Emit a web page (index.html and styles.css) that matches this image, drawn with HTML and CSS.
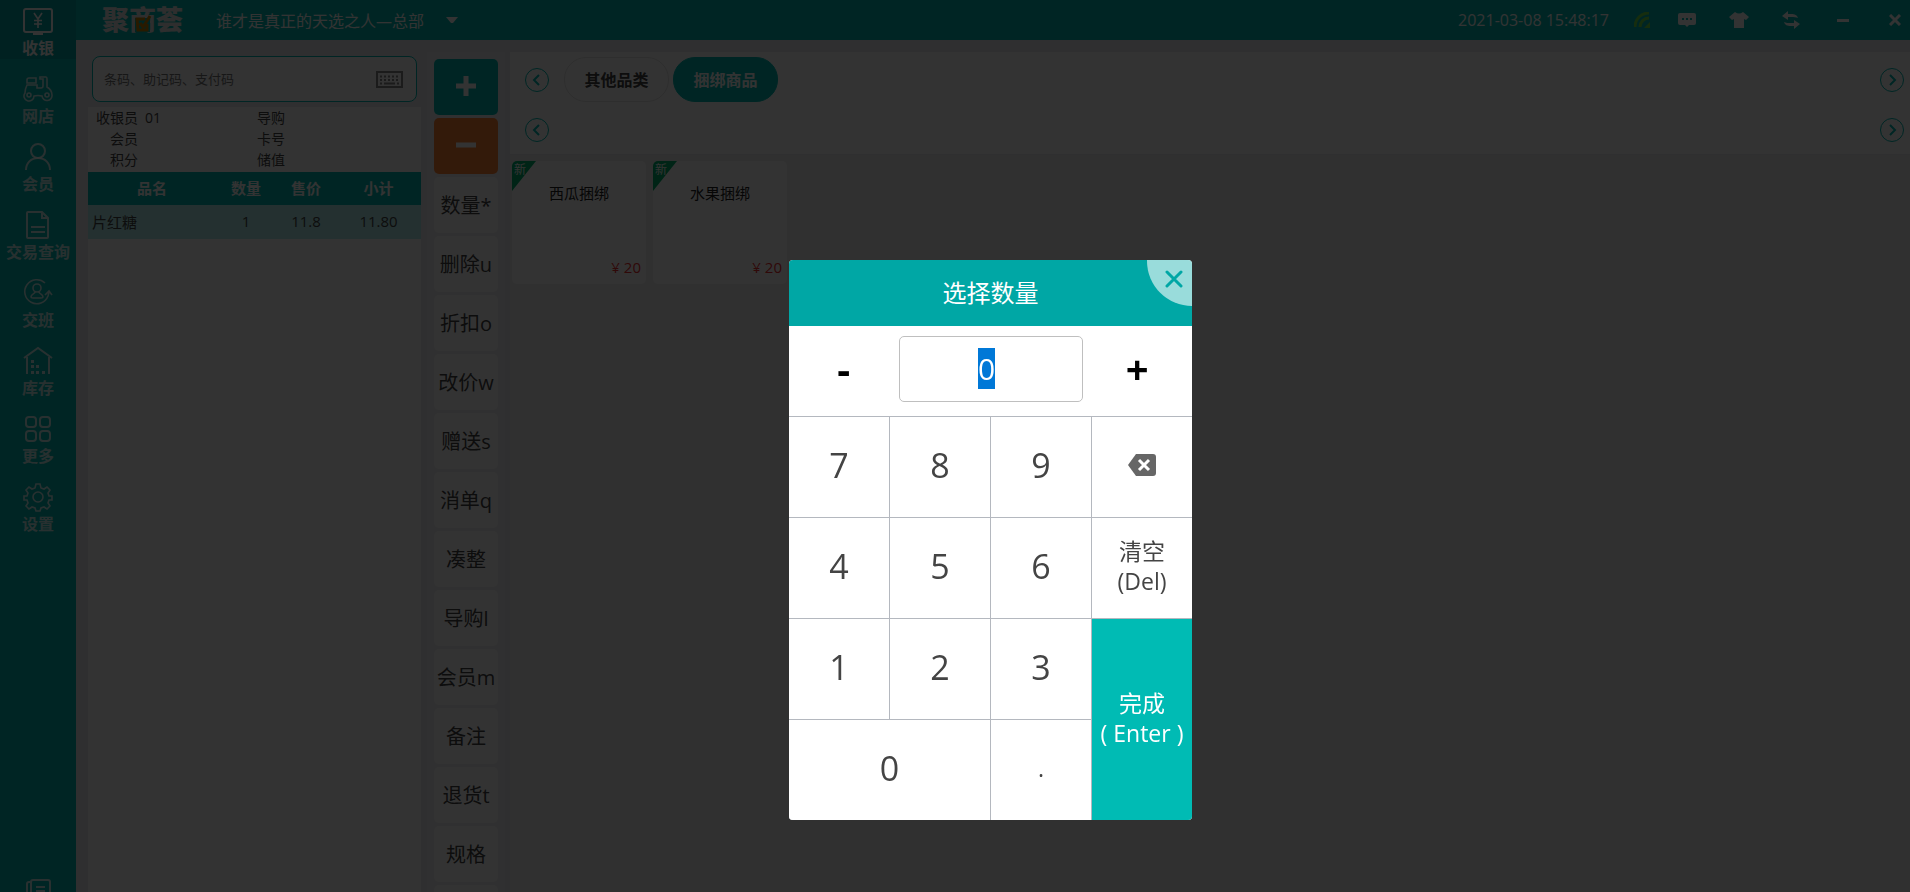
FILE: index.html
```html
<!DOCTYPE html>
<html lang="zh-CN">
<head>
  <meta charset="UTF-8">
  <title>聚商荟收银</title>
  <link rel="stylesheet" href="styles.css">
</head>
<body>

  <div class="app">
    <nav class="sidebar">
      <a href="#" class="nav-item active">
        <svg width="30" height="30" viewBox="0 0 30 30"><rect x="1" y="3" width="28" height="23" rx="2"/><path class="thin" d="M11 7l4 6 4-6M15 13v9M11 14.500h8M11 18h8"/><path d="M15 26v2" stroke-width="4"/><path d="M10 28h10"/></svg>
        <span>收银</span>
      </a>
      <a href="#" class="nav-item">
        <svg class="thin" width="30" height="30" viewBox="0 0 30 30"><path d="M6 4h7v5H4V6q0-2 2-2zM17 3h6q1 0 1 2v8q5 3 5 8a5 5 0 0 1-10 1q-4-1-8 0a5 5 0 1 1-9-3q0-4 2-8h10v3h4q2 0 2-2V5h-3z"/><circle cx="6" cy="21" r="2"/><circle cx="24" cy="21" r="2"/></svg>
        <span>网店</span>
      </a>
      <a href="#" class="nav-item">
        <svg width="30" height="30" viewBox="0 0 30 30"><circle cx="15" cy="9" r="7"/><path d="M3 28c0-7 5-12 12-12s12 5 12 12"/></svg>
        <span>会员</span>
      </a>
      <a href="#" class="nav-item">
        <svg width="30" height="30" viewBox="0 0 30 30"><path d="M5 2h14l6 6v19a1 1 0 0 1-1 1H5a1 1 0 0 1-1-1V3a1 1 0 0 1 1-1zM19 2v6h6M8 17h14M8 22h14"/></svg>
        <span>交易查询</span>
      </a>
      <a href="#" class="nav-item">
        <svg class="thin" width="30" height="30" viewBox="0 0 30 30"><path d="M22 5a12 12 0 1 0 3 13l1-4M22 17l4-4 3 4"/><circle cx="14" cy="10" r="4"/><path d="M12 14c0 2-4 2-4 5 0 1 1 1 2 1h8c1 0 2 0 2-1 0-3-4-3-4-5"/></svg>
        <span>交班</span>
      </a>
      <a href="#" class="nav-item">
        <svg width="30" height="30" viewBox="0 0 30 30"><path d="M1 12L15 2l14 10M4 11v17M26 11v17"/><path class="solid" d="M8 14h3v3H8zM8 19h3v3H8zM13 19h3v3h-3zM8 25h3v3H8zM13 25h3v3h-3zM19 25h3v3h-3z"/></svg>
        <span>库存</span>
      </a>
      <a href="#" class="nav-item">
        <svg width="30" height="30" viewBox="0 0 30 30"><rect x="3" y="3" width="10" height="10" rx="3"/><rect x="17" y="3" width="10" height="10" rx="3"/><rect x="3" y="17" width="10" height="10" rx="3"/><rect x="17" y="17" width="10" height="10" rx="3"/></svg>
        <span>更多</span>
      </a>
      <a href="#" class="nav-item">
        <svg class="thin" width="30" height="30" viewBox="0 0 30 30"><circle cx="15" cy="15" r="5"/><path d="M13 2h4l1 4 3 1 3-2 3 3-2 3 1 3 3 0v4l-3 0-1 3 2 3-3 3-3-2-3 1-1 3h-4l-1-3-3-1-3 2-3-3 2-3-1-3-3 0v-4l3 0 1-3-2-3 3-3 3 2 3-1z"/></svg>
        <span>设置</span>
      </a>
      <div class="sidebar-footer">
        <a href="#" class="nav-item" aria-label="新闻">
          <svg width="30" height="30" viewBox="0 0 30 30"><path d="M8 28V4a2 2 0 0 1 2-2h15a2 2 0 0 1 2 2v24M8 4H6a2 2 0 0 0-2 2v22M13 9h9M13 13h9"/></svg>
        </a>
      </div>
    </nav>

    <div class="main">
      <header class="topbar">
        <div class="logo">聚<span class="logo-mid">商<svg width="18" height="18" viewBox="0 0 18 18"><path class="patch" d="M1 3h15v14H1z"/><path d="M11 4H3l1 11h9V9M6 8l3 4 7-11"/></svg></span>荟</div>
        <button class="store">谁才是真正的天选之人—总部 <svg width="12" height="6" viewBox="0 0 12 6"><path d="M0 0h12L7 6H5z"/></svg></button>
        <time class="clock">2021-03-08 15:48:17</time>
        <svg class="signal" width="16" height="16" viewBox="0 0 16 16"><path d="M1 15C1 7 7 1 15 1M6 15c0-5 4-9 9-9"/><path class="dot" d="M10 16l6-6v6z"/></svg>
        <div class="window-tools">
          <button aria-label="消息"><svg width="20" height="16" viewBox="0 0 20 16"><path d="M3 1h14a2 2 0 0 1 2 2v8a2 2 0 0 1-2 2h-5l-2 2-2-2H3a2 2 0 0 1-2-2V3a2 2 0 0 1 2-2z"/><path class="hole" d="M5 6h2v2H5zM9 6h2v2H9zM13 6h2v2h-2z"/></svg></button>
          <button aria-label="换肤"><svg width="20" height="16" viewBox="0 0 20 16"><path d="M6 0q4 3 8 0l6 5-3 3-2-1v9H5V7L3 8 0 5z"/></svg></button>
          <button aria-label="切换"><svg width="18" height="18" viewBox="0 0 18 18"><path d="M0 5l6-5v3h3c4 0 6 1 7 4-2-1-4-1-7-1H6v3zM18 13l-6 5v-3H9c-4 0-6-1-7-4 2 1 4 1 7 1h3V9z"/></svg></button>
          <button aria-label="最小化"><svg width="12" height="12" viewBox="0 0 12 12"><path d="M0 5h12v3H0z"/></svg></button>
          <button aria-label="关闭"><svg width="12" height="12" viewBox="0 0 12 12"><path class="stroke" d="M1 1l10 10M11 1L1 11"/></svg></button>
        </div>
      </header>

      <div class="content">
        <section class="order">
          <div class="search">
            <input type="text" aria-label="商品搜索" placeholder="条码、助记码、支付码">
            <svg width="27" height="17" viewBox="0 0 27 17"><rect x="1" y="1" width="25" height="15"/><path d="M4 5.500h19M4 9h19" stroke-dasharray="2 2"/><path d="M4 12.500h2M8 12.500h11M21 12.500h2"/></svg>
          </div>
          <dl class="info">
            <dt>收银员</dt><dd>01</dd><dt>导购</dt><dd></dd>
            <dt>会员</dt><dd></dd><dt>卡号</dt><dd></dd>
            <dt>积分</dt><dd></dd><dt>储值</dt><dd></dd>
          </dl>
          <div class="goods">
            <table>
              <thead>
                <tr><th class="col-name">品名</th><th class="col-num">数量</th><th class="col-num">售价</th><th>小计</th></tr>
              </thead>
              <tbody>
                <tr><td class="name">片红糖</td><td>1</td><td>11.8</td><td>11.80</td></tr>
              </tbody>
            </table>
          </div>
        </section>

        <aside class="actions">
          <button class="plus" aria-label="增加"><svg width="20" height="20" viewBox="0 0 20 20"><path d="M10 0v20M0 10h20"/></svg></button>
          <button class="minus" aria-label="减少"><svg width="20" height="20" viewBox="0 0 20 20"><path d="M0 10h20"/></svg></button>
          <button>数量*</button>
          <button>删除u</button>
          <button>折扣o</button>
          <button>改价w</button>
          <button>赠送s</button>
          <button>消单q</button>
          <button>凑整</button>
          <button>导购l</button>
          <button>会员m</button>
          <button>备注</button>
          <button>退货t</button>
          <button>规格</button>
          <button></button>
        </aside>

        <section class="shop">
          <div class="categories">
            <div class="cat-row">
              <button class="arrow" aria-label="上一页"><svg width="12" height="12" viewBox="0 0 12 12"><path d="M8 1L3 6l5 5"/></svg></button>
              <div class="cats">
                <button class="cat">其他品类</button>
                <button class="cat selected">捆绑商品</button>
              </div>
              <button class="arrow" aria-label="下一页"><svg width="12" height="12" viewBox="0 0 12 12"><path d="M4 1l5 5-5 5"/></svg></button>
            </div>
            <div class="cat-row">
              <button class="arrow" aria-label="上一页"><svg width="12" height="12" viewBox="0 0 12 12"><path d="M8 1L3 6l5 5"/></svg></button>
              <div class="cats"></div>
              <button class="arrow" aria-label="下一页"><svg width="12" height="12" viewBox="0 0 12 12"><path d="M4 1l5 5-5 5"/></svg></button>
            </div>
          </div>
          <div class="products">
            <article class="product">
              <span class="badge">新</span>
              <h3>西瓜捆绑</h3>
              <p class="price">¥ 20</p>
            </article>
            <article class="product">
              <span class="badge">新</span>
              <h3>水果捆绑</h3>
              <p class="price">¥ 20</p>
            </article>
          </div>
        </section>
      </div>
    </div>
  </div>

  <div class="overlay">
    <div class="dialog" role="dialog" aria-labelledby="dialog-title">
      <div class="dialog-head">
        <h2 id="dialog-title">选择数量</h2>
        <button class="close" aria-label="关闭"><svg width="18" height="18" viewBox="0 0 18 18"><path d="M2 2l14 14M16 2L2 16"/></svg></button>
      </div>
      <div class="quantity">
        <button>-</button>
        <input type="text" id="quantity" aria-label="数量" value="0">
        <button>+</button>
      </div>
      <div class="keypad">
        <button>7</button>
        <button>8</button>
        <button>9</button>
        <button aria-label="退格"><svg width="28" height="22" viewBox="0 0 28 22"><path d="M8 0h17a3 3 0 0 1 3 3v16a3 3 0 0 1-3 3H8L0 11z"/><path class="cross" d="M11 6l10 10M21 6L11 16"/></svg></button>
        <button>4</button>
        <button>5</button>
        <button>6</button>
        <button class="small">清空<br>(Del)</button>
        <button>1</button>
        <button>2</button>
        <button>3</button>
        <button class="small enter">完成<br>( Enter )</button>
        <button class="zero">0</button>
        <button class="small">.</button>
      </div>
    </div>
  </div>

  <script>
    const quantity = document.getElementById("quantity");
    quantity.focus();
    quantity.select();
  </script>

</body>
</html>
```
FILE: styles.css
```css
* {
  box-sizing: border-box;
}
body {
  margin: 0;
  font-family: "Open Sans", "Noto Sans CJK SC", sans-serif;
  font-size: 16px;
  color: #444;
  overflow: hidden;
}
button, input {
  font-family: inherit;
  color: inherit;
  border: none;
  padding: 0;
  background: none;
}
button {
  cursor: pointer;
}
svg {
  display: block;
  flex: none;
}
h2, h3, p, dl, dd {
  margin: 0;
}
.app {
  display: flex;
  height: 100vh;
  background-color: #ebecf0;
}

/* sidebar */
.sidebar {
  width: 76px;
  flex: none;
  display: flex;
  flex-direction: column;
  gap: 9px;
  background-color: #00bbb4;
  overflow: hidden;
}
.nav-item {
  height: 59px;
  flex: none;
  padding-top: 6px;
  display: flex;
  flex-direction: column;
  align-items: center;
  color: rgba(255,255,255,0.8);
  font-weight: bold;
  line-height: 24px;
  text-decoration: none;
}
.nav-item.active {
  background-color: #00a7a5;
  color: #fff;
}
.nav-item svg {
  fill: none;
  stroke: currentColor;
  stroke-width: 2;
}
.nav-item .solid {
  fill: currentColor;
  stroke: none;
}
.nav-item .thin {
  stroke-width: 1.6;
}
.sidebar-footer {
  height: 20px;
  margin-top: auto;
  overflow: hidden;
}

/* top bar */
.main {
  flex: 1;
  min-width: 0;
  display: flex;
  flex-direction: column;
}
.topbar {
  height: 40px;
  flex: none;
  padding-left: 26px;
  display: flex;
  align-items: center;
  background-color: #00bbb4;
  color: #fff;
}
.logo {
  font-size: 27px;
  font-weight: 900;
  line-height: 40px;
  color: #e6e6e6;
}
.logo-mid {
  position: relative;
}
.logo-mid svg {
  position: absolute;
  left: 5px;
  bottom: 5px;
  fill: none;
  stroke: #c88400;
  stroke-width: 3;
}
.logo-mid .patch {
  fill: #00bbb4;
  stroke: none;
}
.store {
  display: flex;
  align-items: center;
  gap: 22px;
  margin-left: 33px;
  font-size: 16px;
}
.store svg {
  fill: #fff;
}
.clock {
  margin-left: auto;
  margin-right: 25px;
}
.signal {
  fill: none;
  stroke: #6ee048;
  stroke-width: 3;
}
.signal .dot {
  fill: #6ee048;
  stroke: none;
}
.window-tools {
  display: flex;
  gap: 22px;
  margin-left: 22px;
}
.window-tools button {
  width: 30px;
  height: 40px;
  display: flex;
  align-items: center;
  justify-content: center;
}
.window-tools svg {
  fill: #fff;
}
.window-tools .hole {
  fill: #00bbb4;
}
.window-tools .stroke {
  stroke: #fff;
  stroke-width: 3;
}

/* order */
.content {
  flex: 1;
  min-height: 0;
  display: flex;
  padding: 12px 0 0 12px;
}
.order {
  width: 333px;
  flex: none;
  display: flex;
  flex-direction: column;
}
.search {
  height: 46px;
  flex: none;
  margin: 4px 4px 5px;
  padding: 0 13px 0 11px;
  display: flex;
  align-items: center;
  border: 1px solid #00bbb4;
  border-radius: 8px;
  background-color: #fff;
}
.search input {
  flex: 1;
  min-width: 0;
  height: 100%;
  font-size: 13px;
}
.search input::placeholder {
  color: #757575;
}
.search svg {
  fill: none;
  stroke: #888;
  stroke-width: 2;
}
.info {
  display: grid;
  grid-template-columns: 50px 97px 36px 1fr;
  column-gap: 7px;
  padding-bottom: 2px;
  background-color: #fff;
  font-size: 14px;
  line-height: 21px;
}
.info dt {
  text-align: right;
}
.goods {
  flex: 1;
  background-color: #fff;
}
table {
  width: 100%;
  table-layout: fixed;
  border-collapse: collapse;
  font-size: 15px;
  text-align: center;
}
th, td {
  padding: 0 0 2px;
}
th {
  height: 33px;
  background-color: #00bbb4;
  color: #fff;
}
td {
  height: 34px;
  background-color: #b3f0ee;
}
.col-name {
  width: 128px;
}
.col-num {
  width: 60px;
}
.name {
  padding-left: 4px;
  text-align: left;
}

/* action buttons */
.actions {
  width: 78px;
  flex: none;
  margin: 0 5px 0 6px;
  padding: 7px;
  display: flex;
  flex-direction: column;
  gap: 3px;
  background-color: #f0f0f2;
  overflow: hidden;
}
.actions button {
  height: 56px;
  flex: none;
  padding-bottom: 2px;
  border-radius: 5px;
  background-color: #fff;
  font-size: 20px;
  white-space: nowrap;
}
.actions svg {
  margin: 0 auto;
  stroke: #fff;
  stroke-width: 5;
}
.actions .plus {
  background-color: #00bbb4;
}
.actions .minus {
  background-color: #ff8235;
}

/* products */
.shop {
  flex: 1;
  min-width: 0;
  background-color: #f0f0f0;
}
.categories {
  display: grid;
  gap: 5px;
  padding: 5px 6px 2px 15px;
  background-color: #fff;
}
.cat-row {
  height: 45px;
  display: flex;
  align-items: center;
  gap: 15px;
}
.cats {
  flex: 1;
  display: flex;
  gap: 4px;
}
.cat {
  width: 105px;
  height: 45px;
  padding-bottom: 2px;
  border: 1px solid #e4e4e4;
  border-radius: 22px;
  font-size: 16px;
  font-weight: bold;
}
.cat.selected {
  border-color: #00bbb4;
  background-color: #00bbb4;
  color: #fff;
}
.arrow {
  width: 24px;
  height: 24px;
  display: flex;
  align-items: center;
  justify-content: center;
  border: 1px solid #00bbb4;
  border-radius: 50%;
}
.arrow svg {
  fill: none;
  stroke: #00bbb4;
  stroke-width: 2;
}
.products {
  display: flex;
  flex-wrap: wrap;
  gap: 7px;
  padding: 6px 2px;
  border-top: 1px solid #ebecf0;
}
.product {
  position: relative;
  width: 134px;
  height: 123px;
  padding: 21px 5px 5px;
  display: flex;
  flex-direction: column;
  justify-content: space-between;
  border-radius: 5px;
  background-color: #fff;
  overflow: hidden;
}
.product h3 {
  font-size: 15px;
  font-weight: normal;
  line-height: 22px;
  text-align: center;
  color: #222;
}
.price {
  font-size: 15px;
  line-height: 24px;
  text-align: right;
  color: #f02f2f;
}
.badge {
  position: absolute;
  top: 0;
  left: 0;
  width: 24px;
  height: 30px;
  padding-left: 2px;
  background-color: #00b46e;
  clip-path: polygon(0 0, 100% 0, 0 100%);
  color: #fff;
  font-size: 12px;
  line-height: 18px;
}

/* quantity dialog */
.overlay {
  position: fixed;
  inset: 0;
  padding: 260px 0 0 71px;
  display: flex;
  justify-content: center;
  align-items: flex-start;
  background-color: rgba(0,0,0,0.8);
}
.dialog {
  width: 403px;
  border-radius: 4px;
  background-color: #fff;
  overflow: hidden;
}
.dialog-head {
  position: relative;
  background-color: #00a7a5;
  color: #fff;
}
.dialog-head h2 {
  font-size: 24px;
  font-weight: normal;
  line-height: 66px;
  text-align: center;
}
.close {
  position: absolute;
  top: 0;
  right: 0;
  width: 45px;
  height: 46px;
  padding: 0 0 8px 8px;
  display: flex;
  align-items: center;
  justify-content: center;
  border-bottom-left-radius: 45px;
  background-color: rgba(255,255,255,0.6);
}
.close svg {
  stroke: #00a7a5;
  stroke-width: 3;
  stroke-linecap: round;
}
.quantity {
  display: grid;
  grid-template-columns: 1fr 184px 1fr;
  padding: 10px 0 14px;
}
.quantity button {
  font-size: 40px;
  font-weight: bold;
  line-height: 66px;
  color: #000;
}
.quantity input {
  width: 100%;
  height: 66px;
  padding: 0 8px 2px 0;
  border: 1px solid #bfbfbf;
  border-radius: 5px;
  outline: none;
  font-size: 30px;
  text-align: center;
}
.quantity input::selection {
  background-color: #0078d7;
  color: #fff;
}
.keypad {
  display: grid;
  grid-template-columns: repeat(4, 1fr);
  grid-auto-rows: 100px;
  gap: 1px;
  border-top: 1px solid #b4b8bf;
  background-color: #b4b8bf;
}
.keypad button {
  padding-bottom: 4px;
  background-color: #fff;
  font-size: 34px;
}
.keypad .small {
  font-size: 23px;
  line-height: 30px;
}
.keypad .enter {
  grid-column: 4;
  grid-row: 3 / 5;
  background-color: #00bbb4;
  color: #fff;
}
.keypad .zero {
  grid-column: span 2;
}
.keypad svg {
  margin: 0 auto;
  fill: #666;
}
.keypad .cross {
  stroke: #fff;
  stroke-width: 3;
}
```
